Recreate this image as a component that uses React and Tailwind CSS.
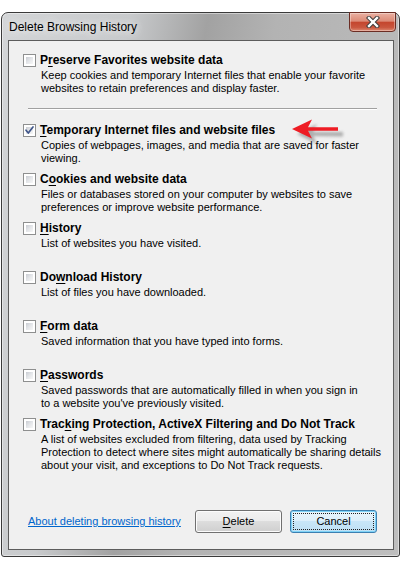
import React from 'react';

const items = [
  {
    pre: 'P', key: 'r', post: 'eserve Favorites website data',
    desc: ['Keep cookies and temporary Internet files that enable your favorite', 'websites to retain preferences and display faster.'],
  },
  {
    pre: '', key: 'T', post: 'emporary Internet files and website files', checked: true, arrow: true,
    desc: ['Copies of webpages, images, and media that are saved for faster', 'viewing.'],
  },
  {
    pre: 'C', key: 'o', post: 'okies and website data',
    desc: ['Files or databases stored on your computer by websites to save', 'preferences or improve website performance.'],
  },
  { pre: '', key: 'H', post: 'istory', desc: ['List of websites you have visited.'] },
  { pre: 'Do', key: 'w', post: 'nload History', desc: ['List of files you have downloaded.'] },
  { pre: '', key: 'F', post: 'orm data', desc: ['Saved information that you have typed into forms.'] },
  {
    pre: '', key: 'P', post: 'asswords',
    desc: ['Saved passwords that are automatically filled in when you sign in', "to a website you've previously visited."],
  },
  {
    pre: 'Trac', key: 'k', post: 'ing Protection, ActiveX Filtering and Do Not Track',
    desc: [
      'A list of websites excluded from filtering, data used by Tracking',
      'Protection to detect where sites might automatically be sharing details',
      'about your visit, and exceptions to Do Not Track requests.',
    ],
  },
];

const Checkbox = ({ checked }) => (
  <span className="relative mt-[2px] w-[13px] h-[13px] shrink-0 border border-[#8e8f8f] bg-white p-[2px]">
    <span className="block w-full h-full bg-[linear-gradient(135deg,#c9ccd2_0%,#e4e6e9_50%,#f7f7f7_100%)]" />
    {checked && (
      <svg className="absolute left-0 top-0" width="11" height="11" viewBox="0 0 11 11">
        <path d="M2 5.2 L4.3 8 L9 2" fill="none" stroke="#40568a" strokeWidth="1.7" strokeLinecap="round" strokeLinejoin="round" />
      </svg>
    )}
  </span>
);

const Arrow = () => (
  <svg className="absolute left-[281px] top-[-5px]" width="60" height="28" viewBox="0 0 60 28">
    <defs>
      <filter id="blur" x="-20%" y="-50%" width="140%" height="200%">
        <feGaussianBlur stdDeviation="1.6" />
      </filter>
    </defs>
    <path d="M4 14 L24 4 L20 12 L50 12 L50 16.5 L20 16 L24 24 Z" fill="#777" opacity="0.55" filter="url(#blur)" transform="translate(3 3)" />
    <path d="M2 12 L22 2.5 L18 10.3 L48 10.3 L48 13.8 L18 13.7 L22 21.5 Z" fill="#ee1c24" />
  </svg>
);

const Item = ({ item }) => (
  <div className="relative h-[49px] flex pl-[14px] gap-[4px]">
    <Checkbox checked={item.checked} />
    <div className="flex flex-col">
      <div className="h-[16px] leading-[16px] text-[12px] font-bold whitespace-nowrap">
        {item.pre}
        <span className="underline underline-offset-2">{item.key}</span>
        {item.post}
      </div>
      <div className="mt-[1px] ml-[1px] text-[11px] leading-[13px]">
        {item.desc.map((line) => (
          <div key={line} className="whitespace-nowrap">{line}</div>
        ))}
      </div>
    </div>
    {item.arrow && <Arrow />}
  </div>
);

const App = () => {
  return (
    <div className="w-[402px] h-[570px] bg-white overflow-hidden font-['Liberation_Sans',Arial,sans-serif] text-black">
      <div className="ml-[1px] mt-[12px] w-[399px] h-[545px] flex flex-col rounded-t-[7px] rounded-b-[3px] border border-[#3a3a3a] shadow-[inset_0_0_0_1px_rgba(255,255,255,0.45)] bg-[linear-gradient(100deg,#d3d5d7_0%,#c8cacc_26%,#a2a2a2_42%,#b3b3b3_56%,#bebebe_100%)] pl-[6px] pr-[5px] pb-[6px]">
        {/* title bar */}
        <div className="h-[27px] flex items-start justify-between">
          <span className="mt-[6px] ml-[1px] text-[12px] leading-[16px] [text-shadow:0_0_6px_#ececec,0_0_10px_#ececec]">
            Delete Browsing History
          </span>
          <button className="-mt-[1px] -mr-[2px] w-[47px] h-[20px] flex items-center justify-center rounded-b-[4px] border border-[#6b2d24] bg-[linear-gradient(#eab0a2_0%,#dc8b77_45%,#c4462e_52%,#c9563e_80%,#dd8a72_100%)] shadow-[inset_0_0_0_1px_rgba(255,255,255,0.35)]">
            <svg width="14" height="12" viewBox="0 0 14 12">
              <path d="M3 2 L11 10 M11 2 L3 10" stroke="#3b3b3b" strokeWidth="4.4" strokeLinecap="square" />
              <path d="M3 2 L11 10 M11 2 L3 10" stroke="#ffffff" strokeWidth="2.4" strokeLinecap="square" />
            </svg>
          </button>
        </div>

        {/* client area */}
        <div className="flex-1 flex flex-col border border-[#5c5c5c] bg-[#f0f0f0] pt-[11px]">
          <Item item={items[0]} />
          <div className="mt-[7px] mb-[12px] ml-[19px] mr-[16px] h-[2px] border-t border-[#a0a0a0] border-b border-b-white" />
          {items.slice(1).map((item) => (
            <Item key={item.post} item={item} />
          ))}

          <div className="mt-[45px] flex items-center pl-[19px] pr-[16px] text-[11px]">
            <a href="#" className="text-[#0066cc] underline underline-offset-1">About deleting browsing history</a>
            <button className="ml-auto w-[87px] h-[23px] rounded-[3px] border border-[#707070] bg-[linear-gradient(#f2f2f2_0%,#ebebeb_50%,#dddddd_50%,#cfcfcf_100%)] shadow-[inset_0_0_0_1px_#fcfcfc]">
              <span className="underline underline-offset-2">D</span>elete
            </button>
            <button className="relative ml-[8px] w-[87px] h-[23px] rounded-[3px] border border-[#3c7fb1] bg-[linear-gradient(#e8f4fc_0%,#dceffb_50%,#c8e6f8_50%,#bfe0f4_100%)] shadow-[inset_0_0_0_1px_#7fd3f7]">
              <span className="absolute inset-[2px] border border-dotted border-[#222]" />
              Cancel
            </button>
          </div>
        </div>
      </div>
    </div>
  );
};

export default App;
